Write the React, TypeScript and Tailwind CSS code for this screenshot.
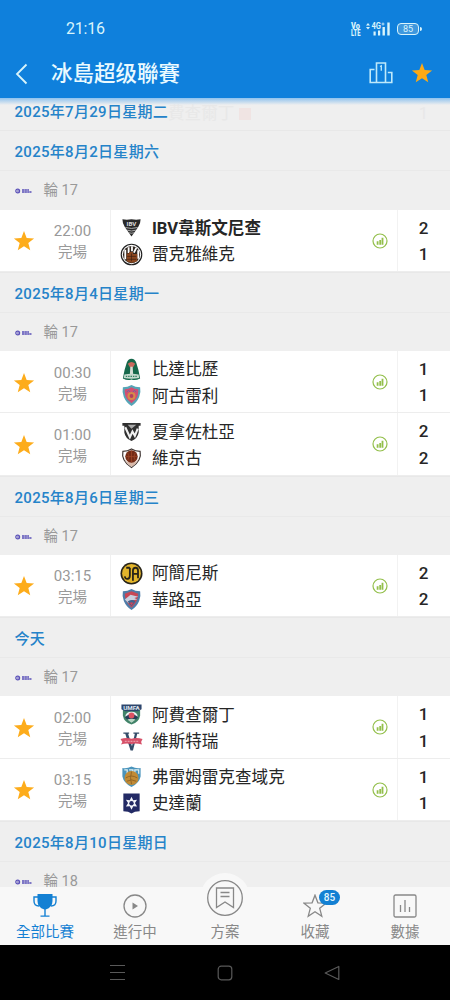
import type { ReactNode } from 'react';

interface Team {
  name: string;
  crest: ReactNode;
  score: number;
  winner?: boolean;
}

interface Match {
  time: string;
  home: Team;
  away: Team;
}

interface MatchDay {
  date: string;
  round: number;
  matches: Match[];
}

const STAR = 'M12 1.2l2.9 7.6 8.1.4-6.3 5.1 2.1 7.9L12 17.8l-6.8 4.4 2.1-7.9L1 9.2l8.1-.4z';
const SHIELD = 'M3 3.5Q8 3.5 12 1Q16 3.5 21 3.5Q22 8 20 13.5Q17.5 19.5 12 23Q6.500 19.5 4 13.5Q2 8 3 3.500z';

function Crest({ children }: { children: ReactNode }) {
  return (
    <svg viewBox="0 0 24 24" className="block size-[23px] shrink-0">
      {children}
    </svg>
  );
}

const ibv = (
  <Crest>
    <path d="M2.500 3.500Q7 4.500 12 3.500Q17 4.500 21.500 3.500Q21.500 8 19 11.500L12 21.500L5 11.500Q2.500 8 2.500 3.500z" fill="#292929" />
    <text x="12" y="10" textAnchor="middle" fontSize="6.500" fontWeight="700" fill="#ddd">IBV</text>
    <path d="M5.500 12Q12 14 18.500 12M7.500 14.800Q12 16.500 16.500 14.800M9.500 17.500Q12 18.500 14.500 17.500" stroke="#bbb" strokeWidth=".9" fill="none" />
  </Crest>
);

const kr = (
  <Crest>
    <circle cx="12" cy="12" r="10.700" fill="#fff" stroke="#202020" strokeWidth="1.200" />
    <circle cx="12" cy="12" r="9" fill="#302720" />
    <path d="M5.500 7v10M9 4.500v6M12.500 3.500v5M17 5l-2.500 5M19 7.500v9" stroke="#fff" strokeWidth="1.900" />
    <path d="M7 11h2.500V9.500h4v2h4.500v7.500q-5.500 3-11 0z" fill="#8a461f" />
    <path d="M7.500 14h9.500M7.500 17h9.500M12 11v8" stroke="#3c2010" strokeWidth=".7" />
  </Crest>
);

const breidablik = (
  <Crest>
    <path d="M12 .8Q15.500 1 17 5Q19.500 12 21 21.500Q16 24 12 22.500Q8 24 3 21.500Q4.500 12 7 5Q8.500 1 12 .8z" fill="#16684b" />
    <path d="M8.200 6Q12 2.500 15.800 6L13.500 10h-3z" fill="#c9685d" />
    <path d="M10.800 9h2.400l.5 8h-3.400z" fill="#d5ddd5" />
    <path d="M4.500 17.300Q12 15.700 19.500 17.300L20 20.800Q12 22.500 4 20.800z" fill="#c4d9cd" />
    <path d="M6 19.200h12" stroke="#347e62" strokeWidth="1.300" strokeDasharray="1.500 1" />
  </Crest>
);

const aegir = (
  <Crest>
    <path d={SHIELD} fill="#55a5b7" />
    <path d="M5 5.500Q9 5.500 12 3.500Q15 5.500 19 5.500Q19.500 12 16.500 16L12 20L7.500 16Q4.500 12 5 5.500z" fill="#d24f72" />
    <circle cx="12" cy="12.500" r="4.200" fill="#d68b49" />
    <circle cx="12" cy="12.500" r="2" fill="#b13f61" />
    <path d="M7 8.500l2-2 1.500 2M13.500 8.500l1.500-2 2 2" stroke="#6b67a0" fill="none" />
  </Crest>
);

const haukar = (
  <Crest>
    <path d="M2.500 3h19v3h-2v7Q18.500 19 12 22Q5.500 19 4.500 13V6h-2z" fill="#303030" />
    <path d="M5.500 7.500L10.300 18l2.700-6 2.500 4.500L18.500 9" stroke="#f1f1f1" strokeWidth="2.200" fill="none" />
    <path d="M8 5h9l-5 4z" fill="#aaa" />
  </Crest>
);

const vikingur = (
  <Crest>
    <path d="M3 4.500Q8 4.500 12 2Q16 4.500 21 4.500Q23 14 12 21.500Q1 14 3 4.500z" fill="#fff" stroke="#3c3330" strokeWidth="1.200" />
    <path d="M4.500 12Q6 17.500 12 20.500Q18 17.500 19.500 12L17 15.500h-10z" fill="#d9b9a9" />
    <circle cx="12" cy="10" r="6.500" fill="#732b16" />
    <path d="M6 10h12M12 4v12M8 6q3 4 0 8M16 6q-3 4 0 8" stroke="#a54a2a" strokeWidth=".7" fill="none" />
  </Crest>
);

const akranes = (
  <Crest>
    <circle cx="12" cy="12" r="11.500" fill="#282419" />
    <circle cx="12" cy="12" r="9.800" fill="#e3b52b" />
    <path d="M5 15Q5.500 18 8 17.500Q10.300 17.300 10.300 14V6M6.500 6h3.800M13.500 19.500V9Q13.500 6 16.300 6Q18.800 6 18.800 9v8M13.500 12.300h5.300" stroke="#282419" strokeWidth="1.900" fill="none" />
  </Crest>
);

const valur = (
  <Crest>
    <path d={SHIELD} fill="#4f7da9" />
    <path d="M5 6L12 3.500L19 6Q19 14 12 20.500Q5 14 5 6z" fill="#c84655" />
    <path d="M5 12l6-5 8 2-4 1.500 3 1.500-6 1-3 3z" fill="#c9d0df" />
    <path d="M8 14q5-3 8 0l-4 5z" fill="#3e638f" />
    <path d="M10 15l2 3 2-3z" fill="#d84254" />
  </Crest>
);

const umfa = (
  <Crest>
    <path d="M3 2h18v11Q20 20 12 22.500Q4 20 3 13z" fill="#418369" />
    <path d="M1.500 1.500h21v5l-4 2H5.500l-4-2z" fill="#2d466d" />
    <text x="12" y="7" textAnchor="middle" fontSize="6.500" fontWeight="700" fill="#dfe7ee">UMFA</text>
    <path d="M5.500 14Q6 9 12 9Q18 9 18.500 14l-6.500 6z" fill="#e9eef0" />
    <path d="M5 14.500L12 10.500l7 4-2 2.500h-10z" fill="#283e57" />
    <circle cx="12" cy="13" r="3" fill="#dc5162" />
    <path d="M8 17.500q4-2 8 0l-4 3z" fill="#b7d5c3" />
  </Crest>
);

const vestri = (
  <Crest>
    <path d="M3.500 2.500h6V4H8.500l4 13 3-13h-1.500V2.500h6V4h-2L13.500 21.500h-2.500L5.500 4h-2z" fill="#344c69" />
    <path d="M.5 9.500Q6 7.500 12 9Q18 7.500 23.500 9.500L22 12.500l1 2.500Q17 13.500 12 14.500Q6 13.500 1 15l1.500-2.500z" fill="#d75169" />
    <path d="M5 11.800h14" stroke="#e99aa7" strokeWidth="1.300" strokeDasharray="2 1" />
  </Crest>
);

const fram = (
  <Crest>
    <path d="M2.500 3Q7 4 12 1.500Q17 4 21.500 3v9Q20 19 12 23Q4 19 2.500 12z" fill="#4a94bc" />
    <path d="M4.500 5h3v4M9.500 5h4v4M15.500 8V5h4v4" stroke="#e0eff1" strokeWidth="1.300" fill="none" />
    <circle cx="12" cy="13.500" r="7.300" fill="#c28b35" />
    <path d="M6 13.500q6-4 12 0M7 17q5-3 10 0M12 7q-2 6 0 13" stroke="#8b6024" strokeWidth=".9" fill="none" />
  </Crest>
);

const stjarnan = (
  <Crest>
    <path d="M3.500 1.500h17v18.500Q15 20 12 22.500Q9 20 3.500 20z" fill="#232a65" />
    <path d="M12 5l1.800 3.500 4-.5-2.200 3.500 2.200 3.500-4-.2L12 18.500l-1.800-3.700-4 .2 2.200-3.500L6.200 8l4 .5z" fill="#f3f5fb" />
    <circle cx="12" cy="11.700" r="2.300" fill="#232a65" />
  </Crest>
);

const DAYS: MatchDay[] = [
  {
    date: '2025年8月2日星期六',
    round: 17,
    matches: [
      {
        time: '22:00',
        home: { name: 'IBV韋斯文尼查', crest: ibv, score: 2, winner: true },
        away: { name: '雷克雅維克', crest: kr, score: 1 },
      },
    ],
  },
  {
    date: '2025年8月4日星期一',
    round: 17,
    matches: [
      {
        time: '00:30',
        home: { name: '比達比歷', crest: breidablik, score: 1 },
        away: { name: '阿古雷利', crest: aegir, score: 1 },
      },
      {
        time: '01:00',
        home: { name: '夏拿佐杜亞', crest: haukar, score: 2 },
        away: { name: '維京古', crest: vikingur, score: 2 },
      },
    ],
  },
  {
    date: '2025年8月6日星期三',
    round: 17,
    matches: [
      {
        time: '03:15',
        home: { name: '阿簡尼斯', crest: akranes, score: 2 },
        away: { name: '華路亞', crest: valur, score: 2 },
      },
    ],
  },
  {
    date: '今天',
    round: 17,
    matches: [
      {
        time: '02:00',
        home: { name: '阿費查爾丁', crest: umfa, score: 1 },
        away: { name: '維斯特瑞', crest: vestri, score: 1 },
      },
      {
        time: '03:15',
        home: { name: '弗雷姆雷克查域克', crest: fram, score: 1 },
        away: { name: '史達蘭', crest: stjarnan, score: 1 },
      },
    ],
  },
  { date: '2025年8月10日星期日', round: 18, matches: [] },
];

function StarIcon({ className }: { className: string }) {
  return (
    <svg viewBox="0 0 24 24" className={className}>
      <path d={STAR} />
    </svg>
  );
}

function StatusBar() {
  return (
    <div className="flex h-[50px] items-end justify-between pr-7 pb-[11px] pl-[66px] text-[#d9f4fb]">
      <span className="text-[16px] leading-[20px] tracking-[-0.2px]">21:16</span>
      <div className="flex h-[20px] items-center">
        <svg viewBox="0 0 47 16" className="h-4 w-[47px]" fill="currentColor">
          <text x="1" y="7.800" fontSize="8.500" fontWeight="900" textLength="9" lengthAdjust="spacingAndGlyphs">Vo</text>
          <text x="1" y="14.800" fontSize="8.500" fontWeight="900" textLength="9.500" lengthAdjust="spacingAndGlyphs">LTE</text>
          <path d="M16 4.500l2-2.500 2 2.500zM16 6l2 2.500L20 6z" />
          <text x="21.500" y="8" fontSize="8.500" fontWeight="700" textLength="9.500" lengthAdjust="spacingAndGlyphs">4G</text>
          <path d="M31.500 3h3M33 1.500v3" stroke="currentColor" strokeWidth=".8" />
          <path d="M23.500 10.500h2.200v4h-2.200zM28 9.500h2.200v5H28zM32.500 6h2.400v8.500h-2.400zM37.300 1.500h2.400v13h-2.400z" />
        </svg>
        <div className="flex h-3 w-[22px] items-center justify-center rounded-[4px] border border-current bg-[#3f98de] text-[9px] leading-none">
          85
        </div>
        <div className="ml-px h-1 w-0.5 rounded-r bg-current" />
      </div>
    </div>
  );
}

function Header() {
  return (
    <header className="h-[98px] shrink-0 bg-[#0f80dc]">
      <StatusBar />
      <div className="flex h-12 items-center pr-[17px] pl-[15px]">
        <svg viewBox="0 0 13 22" className="h-[22px] w-[13px]" fill="none" stroke="#d9f4fb" strokeWidth="1.8">
          <path d="M11.500 1.500L2 11l9.500 9.500" />
        </svg>
        <h1 className="ml-[23px] text-[21.5px] leading-[30px] font-medium text-[#eafaff]">冰島超级聯賽</h1>
        <svg viewBox="0 0 24 22" className="mr-[18px] mb-0.5 ml-auto h-[22px] w-6" fill="none" stroke="#bfe9fa" strokeWidth="1.6">
          <path d="M7.500 20.500V1h9v19.500M5.500 7.500H1.200v13h21.600v-10h-4" />
          <path d="M11 4.500l1.300-.7v5" strokeWidth="1.300" />
        </svg>
        <StarIcon className="mb-0.5 size-[22px] fill-[#fda914]" />
      </div>
    </header>
  );
}

function DateRow({ label }: { label: string }) {
  return (
    <div className="h-[40px] border-t border-[#e8e8e8] bg-[#efefef] pt-[10px] pl-[14.500px] text-[15px] leading-[22px] font-medium tracking-[0.3px] text-[#2583c9]">
      {label}
    </div>
  );
}

function RoundRow({ round }: { round: number }) {
  return (
    <div className="flex h-[39.2px] items-center border-t border-[#e9e9e9] bg-[#efefef] pt-[2px] pl-[15px] text-[#999]">
      <svg viewBox="0 0 17 6" className="h-1.5 w-[17px]" fill="#5a50b8">
        <circle cx="2.700" cy="3" r="1.900" fill="none" stroke="#5a50b8" strokeWidth="1.200" />
        <path d="M2 2.500h2v1H2z" />
        <path d="M7 1.900h7M7 4h9.500" stroke="#5a50b8" strokeWidth="1.500" strokeDasharray="2.300 .3" />
      </svg>
      <span className="ml-[11.500px] text-[14.5px] leading-[22px]">輪 {round}</span>
    </div>
  );
}

function TeamRow({ team }: { team: Team }) {
  return (
    <div className="flex h-[26.500px] items-center">
      {team.crest}
      <span className={`ml-[9px] pt-[2px] text-[16.6px] leading-[26px] whitespace-nowrap text-[#262626] ${team.winner ? 'font-bold' : ''}`}>
        {team.name}
      </span>
    </div>
  );
}

function MatchRow({ match }: { match: Match }) {
  return (
    <div className="flex h-[62.3px] border-b border-[#ededed] bg-white">
      <div className="flex w-[111px] items-center border-r border-[#f0f0f0] pl-[13px]">
        <StarIcon className="mt-0.5 size-[22px] shrink-0 fill-[#fdac1b]" />
        <div className="flex-1 pt-[4px] pr-[3px] pl-[3px] text-center leading-[21px] text-[#999]">
          <div className="text-[15px]">{match.time}</div>
          <div className="text-[14.5px]">完場</div>
        </div>
      </div>
      <div className="flex flex-1 items-center border-r border-[#f2f2f2] pr-[9px] pl-[9px]">
        <div className="flex-1 pt-[2px]">
          <TeamRow team={match.home} />
          <TeamRow team={match.away} />
        </div>
        <svg viewBox="0 0 16 16" className="mt-px size-4" fill="none" stroke="#93bf4b">
          <circle cx="8" cy="8" r="7" strokeWidth="1.200" />
          <path d="M5.600 11.800V8.300M8.200 11.800V7M10.500 11.800V4.800" strokeWidth="1.800" />
        </svg>
      </div>
      <div className="w-[52px] pt-[5px] pr-px text-center text-[17px] leading-[26.500px] font-medium text-[#262626]">
        <div>{match.home.score}</div>
        <div>{match.away.score}</div>
      </div>
    </div>
  );
}

function NavItem({ label, active, children }: { label: string; active?: boolean; children: ReactNode }) {
  return (
    <div className={`flex w-[90px] flex-col items-center ${active ? 'text-[#1380d3]' : 'text-[#888]'}`}>
      <div className="relative flex h-[36px] items-center justify-center">{children}</div>
      <span className="text-[14.5px] leading-[20px]">{label}</span>
    </div>
  );
}

function BottomNav() {
  return (
    <nav className="relative flex h-[58px] shrink-0 bg-[#f8f8f8]">
      <NavItem label="全部比賽" active>
        <svg viewBox="0 0 24 25" className="mt-px h-[25px] w-6" fill="currentColor">
          <path d="M4.500 1h15v7q0 6.500-6.800 8.500V22.500h3.800v1.300h-9v-1.300h3.800V16.500Q4.500 14.500 4.500 8z" />
          <path d="M5 4H1v4q0 5 5 5M19 4h4v4q0 5-5 5" fill="none" stroke="currentColor" strokeWidth="1.400" />
        </svg>
      </NavItem>
      <NavItem label="進行中">
        <svg viewBox="0 0 24 24" className="mt-px size-6" fill="none" stroke="currentColor" strokeWidth="1.300">
          <circle cx="12" cy="12" r="11" />
          <path d="M9.500 8.500l5.500 3.500-5.500 3.500z" fill="currentColor" stroke="none" />
        </svg>
      </NavItem>
      <NavItem label="方案">
        {/* raised button that sticks out over the list */}
        <div className="absolute top-[-14px] flex size-[50px] items-center justify-center rounded-full bg-[#f8f8f8]">
          <svg viewBox="0 0 36 36" className="size-9" fill="none" stroke="currentColor" strokeWidth="1.300">
            <circle cx="18" cy="18" r="17.300" />
            <path d="M9.500 8h17v19.500l-8.500-5.500-8.500 5.500zM13.500 12.500h9M13.500 16.500h9" />
          </svg>
        </div>
      </NavItem>
      <NavItem label="收藏">
        <svg viewBox="0 0 24 24" className="mt-0.5 size-6" fill="none" stroke="currentColor" strokeWidth="1.300">
          <path d={STAR} />
        </svg>
        <span className="absolute top-[3px] left-[16px] flex h-[15px] w-[21px] items-center justify-center rounded-full bg-[#1380d3] text-[10px] leading-none font-medium text-[#e5f7ff]">
          85
        </span>
      </NavItem>
      <NavItem label="數據">
        <svg viewBox="0 0 24 24" className="mt-px size-6" fill="none" stroke="currentColor" strokeWidth="1.300">
          <rect x="1" y="1" width="22" height="22" rx="1.500" />
          <path d="M7.500 11v7M12 6v12M16.500 13v5" />
        </svg>
      </NavItem>
    </nav>
  );
}

function SystemBar() {
  return (
    <div className="flex h-[55px] shrink-0 items-center justify-between bg-black pr-[110px] pl-[109px] text-[#595959]">
      <svg viewBox="0 0 17 17" className="size-[17px]" fill="none" stroke="currentColor" strokeWidth="1.100">
        <path d="M1 1.500h15M1 8.500h15M1 15.500h15" />
      </svg>
      <svg viewBox="0 0 16 16" className="size-4" fill="none" stroke="currentColor" strokeWidth="1.200">
        <rect x="1.200" y="1.200" width="13.600" height="13.600" rx="3" />
      </svg>
      <svg viewBox="0 0 16 16" className="size-4" fill="none" stroke="currentColor" strokeWidth="1.200" strokeLinejoin="round">
        <path d="M14.800 1.500v13L1.200 8z" />
      </svg>
    </div>
  );
}

export default function App() {
  return (
    <div
      lang="zh-Hant"
      className="flex h-[1000px] w-[450px] flex-col overflow-hidden bg-[#efefef] font-[Roboto,'Noto_Sans_CJK_TC',sans-serif]"
    >
      <Header />
      <main className="relative min-h-0 flex-1 overflow-hidden">
        <div className="-mt-[7.700px]">
          <DateRow label="2025年7月29日星期二" />
          {DAYS.map((day) => (
            <section key={day.date}>
              <DateRow label={day.date} />
              <RoundRow round={day.round} />
              {day.matches.map((match) => (
                <MatchRow key={match.home.name} match={match} />
              ))}
            </section>
          ))}
        </div>
        {/* row fading out beneath the sticky date */}
        <div className="absolute top-[6px] right-[22px] left-[168px] flex h-[20px] items-center text-[16.6px] leading-[20px] text-[#e8e8e8]">
          <span>費查爾丁</span>
          <span className="ml-[5px] size-3 bg-[#f0e4e3]" />
          <span className="ml-auto">1</span>
        </div>
        <div className="absolute inset-x-0 top-0 h-[7px] bg-linear-to-b from-[#8fc2ee] to-transparent" />
      </main>
      <BottomNav />
      <SystemBar />
    </div>
  );
}
